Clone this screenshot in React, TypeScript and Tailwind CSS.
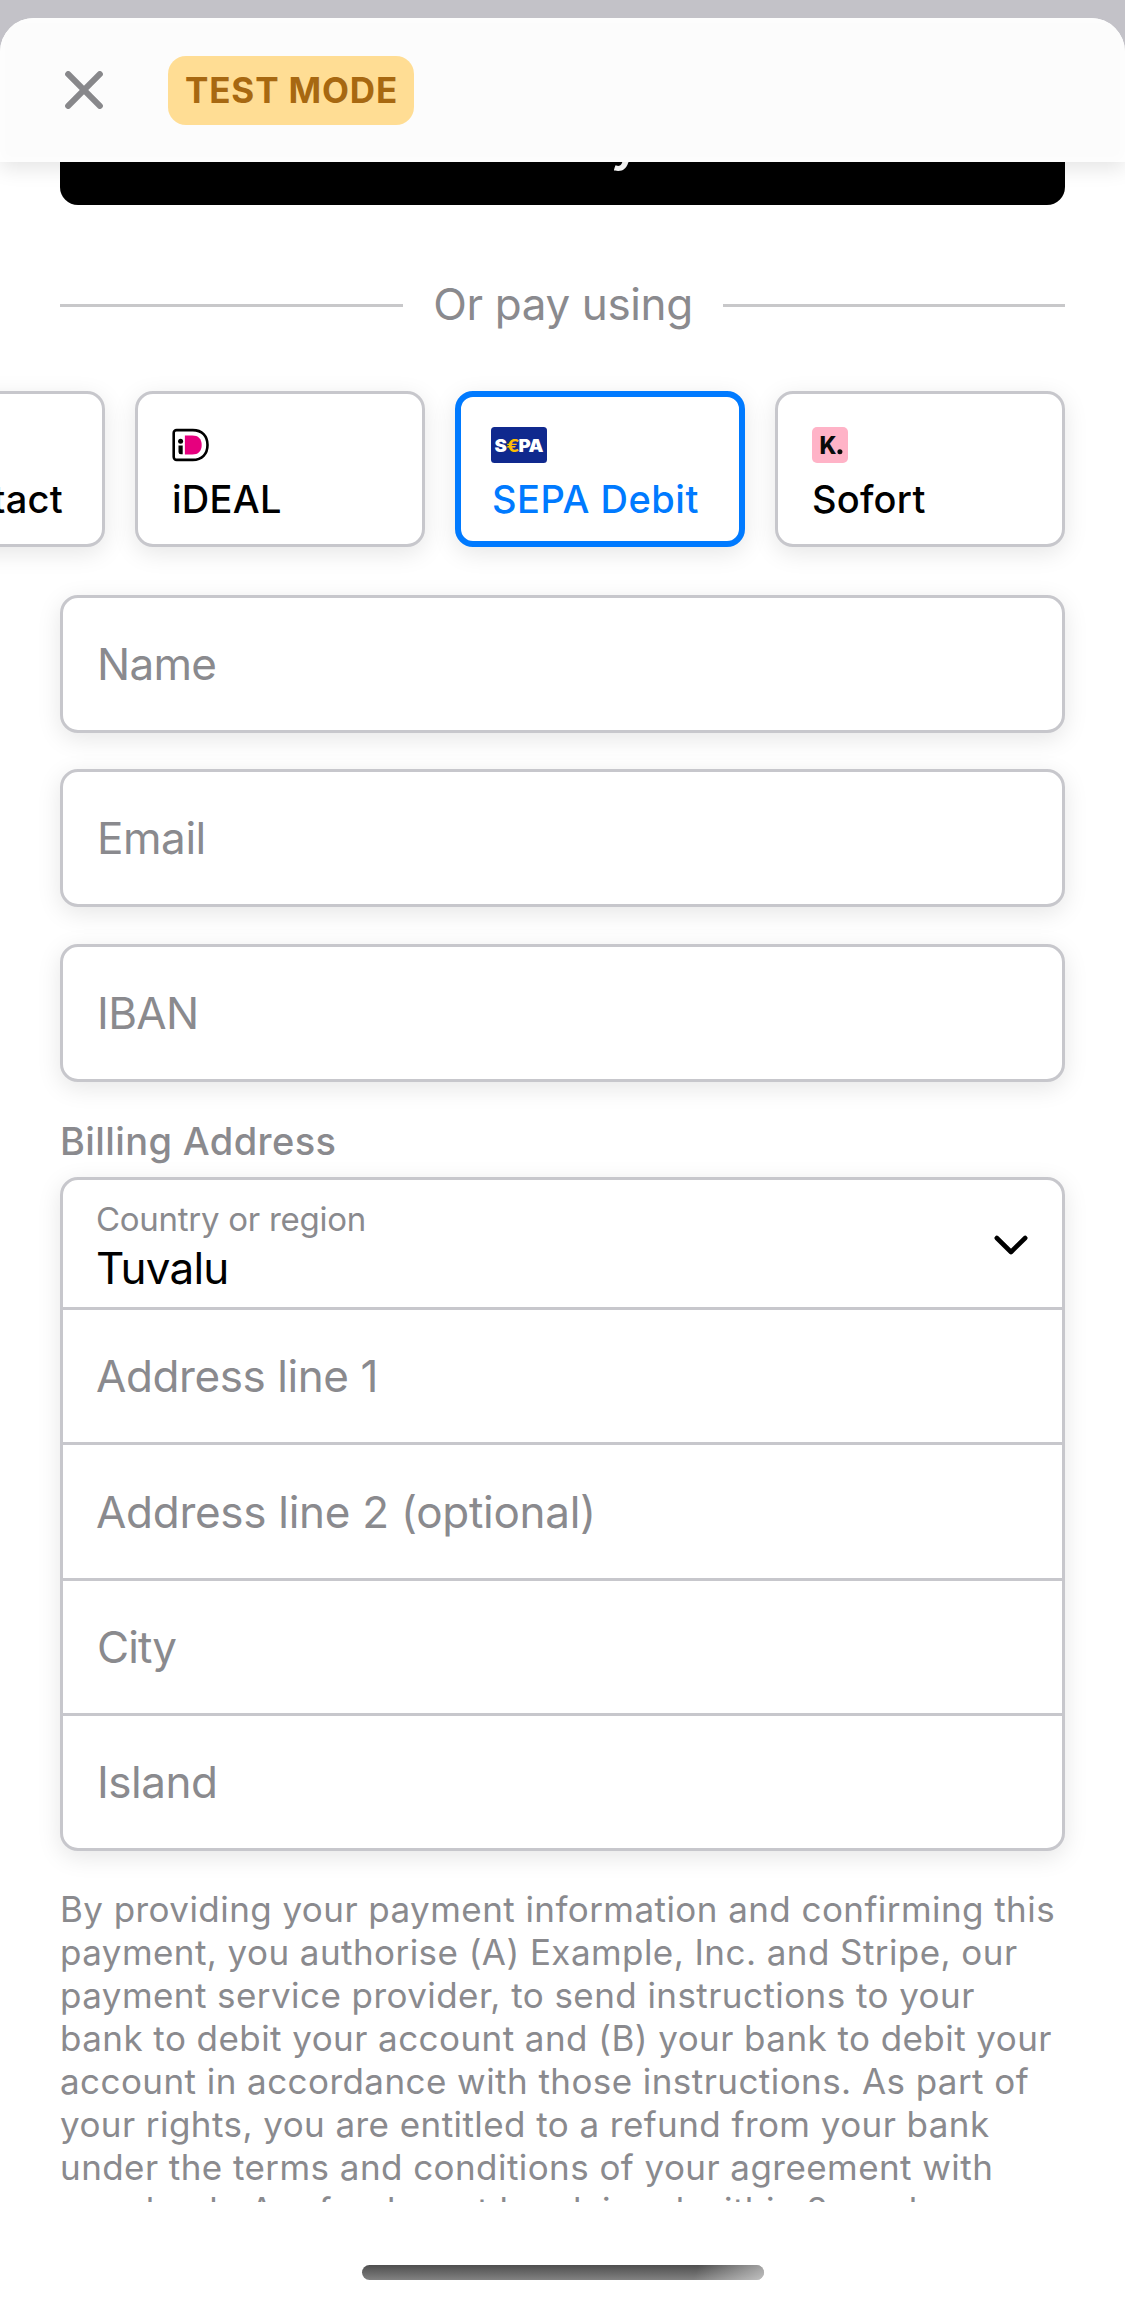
import type { ReactNode } from "react";
import { FaApple } from "react-icons/fa";

function IdealLogo() {
  return (
    <svg width="37" height="36" viewBox="0 0 37 36" className="block">
      <path
        d="M4.9 3.1h16.2C30.3 3.1 35.8 9 35.8 18s-5.5 14.9-14.7 14.9H4.9A2.9 2.9 0 0 1 2 30V6a2.9 2.9 0 0 1 2.9-2.9Z"
        transform="translate(-0.3 0)"
        fill="#fff"
        stroke="#000"
        strokeWidth="2.6"
      />
      <path d="M12.9 8.5h7.4c5.9 0 9.4 3.3 9.4 9.5s-3.5 9.5-9.4 9.5h-7.4Z" fill="#e6007e" />
      <circle cx="8.6" cy="14.3" r="2.5" fill="#000" />
      <path d="M6.5 18.6h4.2v8.7H8.9a2.4 2.4 0 0 1-2.4-2.4Z" fill="#000" />
    </svg>
  );
}

function SepaLogo() {
  return (
    <svg width="56" height="36" viewBox="0 0 56 36" className="block font-[Inter,sans-serif]">
      <rect width="56" height="36" rx="3.5" fill="#10298e" />
      <g fontSize="17.6" fontWeight="900" fill="#fff">
        <text x="3.6" y="24.5" textLength="12.4" lengthAdjust="spacingAndGlyphs">S</text>
        <text x="15.2" y="24.5" fontWeight="700" fill="#ffbe00" textLength="13.4" lengthAdjust="spacingAndGlyphs">€</text>
        <text x="27.6" y="24.5" textLength="12.2" lengthAdjust="spacingAndGlyphs">P</text>
        <text x="37.6" y="24.5" textLength="15" lengthAdjust="spacingAndGlyphs">A</text>
      </g>
    </svg>
  );
}

function KlarnaLogo() {
  return (
    <svg width="36" height="36" viewBox="0 0 36 36" className="block font-[Inter,sans-serif]">
      <rect width="36" height="36" rx="5" fill="#ffb3c7" />
      <text x="7.4" y="27" fontSize="24.7" fontWeight="800" fill="#0a0b09" textLength="17" lengthAdjust="spacingAndGlyphs">
        K
      </text>
      <circle cx="27.9" cy="24.8" r="2.5" fill="#0a0b09" />
    </svg>
  );
}

const SHADOW = "shadow-[0_6px_24px_rgba(0,0,0,0.1)]";

function Tab({ label, icon, tracking }: { label: string; icon: ReactNode; tracking: string }) {
  return (
    <div className={`h-[156px] w-[290px] shrink-0 rounded-[18px] border-[3px] border-[#c7c7cc] bg-white pt-[33px] pl-[34px] ${SHADOW}`}>
      {icon}
      <div className={`mt-4 text-[38px] leading-10 font-medium whitespace-nowrap text-black ${tracking}`}>{label}</div>
    </div>
  );
}

function Field({ label, className }: { label: string; className: string }) {
  return (
    <div className={`mx-[60px] flex h-[138px] items-center rounded-[18px] border-[3px] border-[#c7c7cc] bg-white pl-[34px] text-[44px] ${SHADOW} ${className}`}>
      {label}
    </div>
  );
}

const TERMS = [
  "By providing your payment information and confirming this",
  "payment, you authorise (A) Example, Inc. and Stripe, our",
  "payment service provider, to send instructions to your",
  "bank to debit your account and (B) your bank to debit your",
  "account in accordance with those instructions. As part of",
  "your rights, you are entitled to a refund from your bank",
  "under the terms and conditions of your agreement with",
  "your bank. A refund must be claimed within 8 weeks",
];

export default function App() {
  return (
    <div className="h-[2304px] w-[1125px] overflow-hidden bg-[#c3c2c8] pt-[18px] font-[Inter,sans-serif] text-[#8a8a8e]">
      <div className="flex h-[2286px] flex-col overflow-hidden rounded-t-[34px] bg-white">
        <header className="z-10 flex h-36 shrink-0 items-center bg-[#fcfcfc] pl-[65px] shadow-[0_6px_20px_rgba(0,0,0,0.11),inset_0_0_14px_#fff]">
          <svg width="38" height="38" viewBox="0 0 38 38" className="block">
            <path d="M3.2 3.2 34.8 34.8M34.8 3.2 3.2 34.8" stroke="#88888b" strokeWidth="6.1" strokeLinecap="round" />
          </svg>
          <div className="ml-[65px] flex h-[69px] w-[246px] items-center rounded-[18px] bg-[#ffdd94] pl-[17px] text-[35px] font-bold tracking-[0.868px] whitespace-nowrap text-[#a76811]">
            TEST MODE
          </div>
        </header>

        <main className="h-[2040px] shrink-0 overflow-hidden">
          <div className="mx-[60px] -mt-[89px] flex h-[132px] items-center justify-center gap-1 rounded-[18px] bg-black pl-[7px] text-[56px] font-medium text-white">
            <FaApple size={50} />
            Pay
          </div>

          <div className="mx-[60px] mt-[70px] flex h-[61px] items-center">
            <div className="h-[3px] w-[343px] bg-[#c8c8ca]" />
            <div className="-mt-[3px] flex-1 text-center text-[44px] leading-10 tracking-[-0.365px]">Or pay using</div>
            <div className="h-[3px] w-[342px] bg-[#c8c8ca]" />
          </div>

          <div className="mt-[55px] -ml-[185px] flex gap-[30px]">
            <div className={`flex h-[156px] w-[290px] shrink-0 justify-end rounded-[18px] border-[3px] border-[#c7c7cc] bg-white pt-[85px] pr-[39px] ${SHADOW}`}>
              <span className="text-[38px] leading-10 font-medium tracking-[0.3px] text-black">Bancontact</span>
            </div>
            <Tab label="iDEAL" icon={<IdealLogo />} tracking="tracking-[0.261px]" />
            <div className={`h-[156px] w-[290px] shrink-0 rounded-[18px] border-[6px] border-[#007aff] bg-white pt-[30px] pl-[30px] ${SHADOW}`}>
              <SepaLogo />
              <div className="mt-4 pl-px text-[38px] leading-10 font-medium tracking-[0.509px] whitespace-nowrap text-[#007aff]">SEPA Debit</div>
            </div>
            <Tab label="Sofort" icon={<KlarnaLogo />} tracking="tracking-[0.238px]" />
          </div>

          <Field label="Name" className="mt-12 tracking-[-0.703px]" />
          <Field label="Email" className="mt-9 tracking-[-0.44px]" />
          <Field label="IBAN" className="mt-[37px] tracking-[-0.658px]" />

          <div className="mt-9 ml-[60px] h-[46px] text-[38px] leading-[46px] font-medium tracking-[0.38px]">Billing Address</div>

          <div className={`mx-[60px] mt-[13px] divide-y-[3px] divide-[#c7c7cc] overflow-hidden rounded-[18px] border-[3px] border-[#c7c7cc] bg-white text-[44px] ${SHADOW}`}>
            <div className="flex h-[130px] justify-between pr-[34px] pl-[33px]">
              <div className="pt-[19px]">
                <div className="text-[33px] leading-10 tracking-[-0.275px]">Country or region</div>
                <div className="mt-[5px] leading-[48px] tracking-[-0.752px] text-black">Tuvalu</div>
              </div>
              <svg width="34" height="20" viewBox="0 0 34 20" className="mt-[55px] block">
                <path d="M2.8 3 17 17 31.2 3" fill="none" stroke="#000" strokeWidth="4.6" strokeLinecap="round" strokeLinejoin="round" />
              </svg>
            </div>
            <div className="flex h-[135px] items-center pl-[33px] tracking-[-0.42px]">Address line 1</div>
            <div className="flex h-[136px] items-center pl-[33px] tracking-[-0.28px]">Address line 2 (optional)</div>
            <div className="flex h-[135px] items-center pl-[34px] tracking-[-0.918px]">City</div>
            <div className="flex h-[132px] items-center pl-[34px] tracking-[-0.46px]">Island</div>
          </div>

          <div className="mt-[37px] ml-[60px] text-[35px] leading-[43px] tracking-[0.435px] whitespace-nowrap">
            {TERMS.map((line) => (
              <div key={line}>{line}</div>
            ))}
          </div>
        </main>

        <div className="mt-[63px] ml-[362px] h-[15px] w-[402px] shrink-0 overflow-hidden rounded-full bg-linear-to-b from-[#4f4f4f] to-[#828282]">
          <div className="ml-auto h-full w-24 bg-linear-110 from-transparent from-30% to-white/50" />
        </div>
      </div>
    </div>
  );
}
